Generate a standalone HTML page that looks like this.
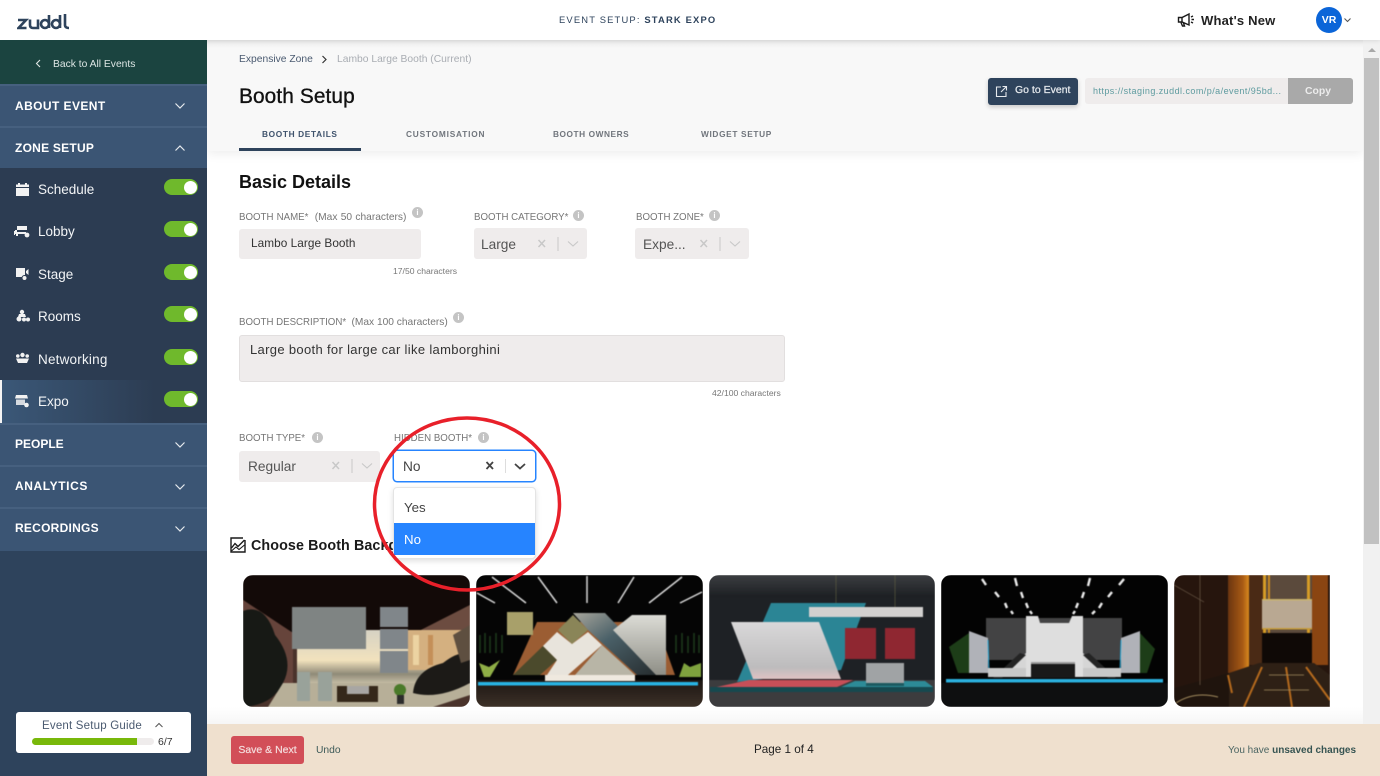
<!DOCTYPE html>
<html><head><meta charset="utf-8"><style>
*{box-sizing:border-box;margin:0;padding:0}
html,body{width:1380px;height:776px;overflow:hidden;background:#fff;font-family:"Liberation Sans",sans-serif}
.a{position:absolute;white-space:nowrap}
.side{left:0;top:40px;width:207px;height:736px;background:#2e435c}
.sec{left:0;width:207px;background:#3b5574;border-top:2px solid #46607f}
.sect{left:15px;color:#fff;font-size:12px;font-weight:bold;line-height:14px}
.it{left:38px;color:#f2f4f6;font-size:13.5px;line-height:16px}
.tg{left:164px;width:34px;height:16px;border-radius:8px;background:#6fb92c}
.tg:after{content:"";position:absolute;right:1.500px;top:1.500px;width:13px;height:13px;border-radius:50%;background:#fff}
.lab{color:#767676;font-size:9.700px;line-height:12px}
.i{width:11px;height:11px;border-radius:50%;background:#c4c4c4;color:#fff;font-size:8px;line-height:11px;text-align:center;font-weight:bold}
.f{background:#efecec;border-radius:3px}
.tab{top:128.500px;font-size:8.300px;font-weight:bold;letter-spacing:.65px;color:#70757c;line-height:10px}
.th{top:575px;height:132px;overflow:hidden;border-radius:10px}
.th svg{display:block;filter:blur(.45px)}
</style></head><body>

<!-- main backgrounds -->
<div class="a" style="left:207px;top:40px;width:1156px;height:111px;background:#f8f8f8;box-shadow:0 3px 10px rgba(0,0,0,.07)"></div>
<div class="a" style="left:207px;top:40px;width:1156px;height:8px;background:linear-gradient(#e9e9e9,#f8f8f8)"></div>
<div class="a" style="left:1363px;top:40px;width:17px;height:736px;background:#f1f1f1"></div>
<div class="a" style="left:1364px;top:58px;width:15px;height:486px;background:#c1c1c1"></div>
<svg class="a" style="left:1366px;top:46px" width="12" height="7"><path d="M2 6L6 2L10 6Z" fill="#a8a8a8"/></svg>

<!-- header -->
<div class="a" style="left:0;top:0;width:1380px;height:40px;background:#fff;box-shadow:0 1px 4px rgba(0,0,0,.1)"></div>
<svg class="a" style="left:17px;top:14px" width="54" height="16" viewBox="0 0 54 16" fill="none" stroke="#2e435c" stroke-width="2.600">
<path d="M1 6H9L1.500 14H9.500"/><path d="M13 5.500V11Q13 14 16 14H21V5.500"/><circle cx="28" cy="10" r="4"/><path d="M32 1V14"/><circle cx="39" cy="10" r="4"/><path d="M43 1V14"/><path d="M48 0V11Q48 14 52 14"/></svg>
<div class="a" style="left:559px;top:14px;font-size:9.400px;letter-spacing:1.170px;color:#2e435c;line-height:12px">EVENT SETUP: <b>STARK EXPO</b></div>
<svg class="a" style="left:1177px;top:12px" width="19" height="16" viewBox="0 0 19 16" fill="none" stroke="#1a1a1a" stroke-width="1.400"><path d="M1.500 5.500H5L12 2V13L5 10H1.500Z"/><path d="M5 5.500V10M4 10.500L5.500 14H7.500L6.500 11"/><path d="M14 5L16 4M14.500 7.500H17M14 10L16 11"/></svg>
<div class="a" style="left:1201px;top:13px;font-size:13px;font-weight:bold;color:#222;line-height:15px;letter-spacing:.2px">What's New</div>
<div class="a" style="left:1316px;top:7px;width:26px;height:26px;border-radius:50%;background:#0b65d8;color:#fff;font-size:10.500px;font-weight:bold;text-align:center;line-height:26px">VR</div>
<svg class="a" style="left:1343px;top:17px" width="9" height="6" fill="none" stroke="#555" stroke-width="1.100"><path d="M1.500 1.500L4.500 4.500L7.500 1.500"/></svg>

<!-- sidebar -->
<div class="a side"></div>
<div class="a" style="left:0;top:40px;width:207px;height:44px;background:#1b4440"></div>
<svg class="a" style="left:35px;top:59px" width="7" height="9" fill="none" stroke="#dfe6e4" stroke-width="1.100"><path d="M5 1L1.500 4.500L5 8"/></svg>
<div class="a" style="left:53px;top:58px;font-size:10.300px;color:#dde6e4;line-height:13px">Back to All Events</div>

<div class="a sec" style="top:84px;height:43px"></div>
<div class="a sec" style="top:126px;height:42px"></div>
<div class="a sect" style="top:99px;letter-spacing:.42px">ABOUT EVENT</div>
<div class="a sect" style="top:141px;letter-spacing:.25px">ZONE SETUP</div>
<svg class="a" style="left:174px;top:102px" width="12" height="8" fill="none" stroke="#e6eaee" stroke-width="1.200"><path d="M1.500 1.500L6 6L10.500 1.500"/></svg>
<svg class="a" style="left:174px;top:144px" width="12" height="8" fill="none" stroke="#e6eaee" stroke-width="1.200"><path d="M1.500 6.500L6 2L10.500 6.500"/></svg>

<div class="a" style="left:0;top:168px;width:207px;height:255px;background:#2c3c52"></div>
<div class="a" style="left:0;top:380px;width:207px;height:43px;background:linear-gradient(90deg,#3b5878,#2c3c52 75%)"></div>
<div class="a" style="left:0;top:380px;width:2px;height:43px;background:#f4f4f4"></div>

<svg class="a" style="left:16px;top:183px" width="13" height="13"><path d="M0 1.500H2V0H4V1.500H9V0H11V1.500H13V4H0ZM0 5H13V13H0Z" fill="#f2f2f2"/></svg>
<svg class="a" style="left:14px;top:224px" width="16" height="15" fill="#f2f2f2"><path d="M3 2H13V6H3Z"/><path d="M1 6H3V8H12V10H1ZM0 7H1V11H0Z"/><path d="M2 10H4V12H2Z"/><circle cx="13" cy="11" r="2.400"/></svg>
<svg class="a" style="left:15px;top:267px" width="15" height="15" fill="#f2f2f2"><path d="M1 1H10V10H1Z"/><path d="M11 4L13.500 2V8L11 6Z"/><circle cx="9.500" cy="11" r="2.500" stroke="#2c3c52"/></svg>
<svg class="a" style="left:16px;top:309px" width="14" height="14" fill="#f2f2f2"><circle cx="6" cy="3" r="2.200"/><path d="M3 5H9L10 8H2Z"/><circle cx="3" cy="10" r="2.500"/><circle cx="8" cy="10.500" r="2"/><circle cx="12" cy="10.500" r="2"/></svg>
<svg class="a" style="left:15px;top:351px" width="15" height="15" fill="#f2f2f2"><circle cx="7.500" cy="4" r="2.200"/><circle cx="2.800" cy="5" r="1.800"/><circle cx="12.200" cy="5" r="1.800"/><path d="M1 7.500H14L12 12H3Z"/></svg>
<svg class="a" style="left:15px;top:394px" width="15" height="15" fill="#f2f2f2"><path d="M1 1H12L13 4.500H0Z"/><path d="M1 5.500H10V11H1Z" opacity=".85"/><circle cx="11.500" cy="11" r="2.300"/></svg>

<div class="a it" style="top:182px">Schedule</div>
<div class="a it" style="top:224px">Lobby</div>
<div class="a it" style="top:267px">Stage</div>
<div class="a it" style="top:309px">Rooms</div>
<div class="a it" style="top:352px;letter-spacing:.2px">Networking</div>
<div class="a it" style="top:394px">Expo</div>
<div class="a tg" style="top:179px"></div>
<div class="a tg" style="top:221px"></div>
<div class="a tg" style="top:264px"></div>
<div class="a tg" style="top:306px"></div>
<div class="a tg" style="top:349px"></div>
<div class="a tg" style="top:391px"></div>

<div class="a sec" style="top:423px;height:43px"></div>
<div class="a sec" style="top:465px;height:43px"></div>
<div class="a sec" style="top:507px;height:44px"></div>
<div class="a sect" style="top:437px">PEOPLE</div>
<div class="a sect" style="top:479px;letter-spacing:.6px">ANALYTICS</div>
<div class="a sect" style="top:521px;letter-spacing:.25px">RECORDINGS</div>
<svg class="a" style="left:174px;top:441px" width="12" height="8" fill="none" stroke="#e6eaee" stroke-width="1.200"><path d="M1.500 1.500L6 6L10.500 1.500"/></svg>
<svg class="a" style="left:174px;top:483px" width="12" height="8" fill="none" stroke="#e6eaee" stroke-width="1.200"><path d="M1.500 1.500L6 6L10.500 1.500"/></svg>
<svg class="a" style="left:174px;top:525px" width="12" height="8" fill="none" stroke="#e6eaee" stroke-width="1.200"><path d="M1.500 1.500L6 6L10.500 1.500"/></svg>

<div class="a" style="left:16px;top:712px;width:175px;height:41px;background:#fff;border-radius:3px"></div>
<div class="a" style="left:42px;top:719px;font-size:11.500px;color:#4a5a70;line-height:14px;letter-spacing:.2px">Event Setup Guide</div>
<svg class="a" style="left:154px;top:722px" width="10" height="7" fill="none" stroke="#555" stroke-width="1"><path d="M1.500 5L5 1.500L8.500 5"/></svg>
<div class="a" style="left:32px;top:738px;width:122px;height:7px;border-radius:4px;background:#efecec"></div>
<div class="a" style="left:32px;top:738px;width:105px;height:7px;border-radius:4px 0 0 4px;background:#78b80a"></div>
<div class="a" style="left:158px;top:736px;font-size:10.500px;color:#333;line-height:13px">6/7</div>

<!-- page head -->
<div class="a" style="left:239px;top:53px;font-size:10.300px;color:#4a5a70;line-height:13px">Expensive Zone</div>
<svg class="a" style="left:321px;top:55px" width="7" height="9" fill="none" stroke="#333" stroke-width="1.200"><path d="M1.500 1L5 4.500L1.500 8"/></svg>
<div class="a" style="left:337px;top:53px;font-size:10.300px;color:#a9adb3;line-height:13px">Lambo Large Booth (Current)</div>
<div class="a" style="left:239px;top:85px;font-size:20.800px;color:#111;line-height:24px;letter-spacing:.12px;-webkit-text-stroke:.35px #111">Booth Setup</div>
<div class="a tab" style="left:262px;color:#3e526c">BOOTH DETAILS</div>
<div class="a tab" style="left:406px;letter-spacing:.8px">CUSTOMISATION</div>
<div class="a tab" style="left:553px;letter-spacing:.55px">BOOTH OWNERS</div>
<div class="a tab" style="left:701px">WIDGET SETUP</div>
<div class="a" style="left:239px;top:148px;width:122px;height:3px;background:#2e435c"></div>

<div class="a" style="left:988px;top:78px;width:90px;height:27px;background:#2e435c;border-radius:3px;box-shadow:0 2px 5px rgba(0,0,0,.2)"></div>
<svg class="a" style="left:995px;top:85px" width="13" height="13" fill="none" stroke="#e5e9ed" stroke-width="1.100"><path d="M6 2H1.500V11.500H11V7M7.500 1.500H11.500V5.500M11.500 1.500L6 7"/></svg>
<div class="a" style="left:1015px;top:84px;font-size:10.500px;color:#e4e8ec;line-height:13px;-webkit-text-stroke:.25px #e4e8ec">Go to Event</div>
<div class="a f" style="left:1085px;top:78px;width:268px;height:26px"></div>
<div class="a" style="left:1093px;top:85px;font-size:9px;color:#5e9b9f;line-height:12px;letter-spacing:.45px">https://staging.zuddl.com/p/a/event/95bd...</div>
<div class="a" style="left:1288px;top:78px;width:65px;height:26px;background:#a9a9a9;border-radius:0 3px 3px 0"></div>
<div class="a" style="left:1305px;top:85px;color:#ececec;font-size:10.400px;font-weight:bold;line-height:13px">Copy</div>

<!-- form -->
<div class="a" style="left:239px;top:171px;font-size:18px;font-weight:bold;color:#111;line-height:22px">Basic Details</div>

<div class="a lab" style="left:239px;top:212px;word-spacing:.5px">BOOTH NAME*&nbsp; <span style="font-size:10.200px">(Max 50 characters)</span></div>
<div class="a i" style="left:412px;top:207px">i</div>
<div class="a f" style="left:239px;top:229px;width:182px;height:30px"></div>
<div class="a" style="left:251px;top:236px;font-size:11.800px;color:#333;line-height:14px;letter-spacing:.05px">Lambo Large Booth</div>
<div class="a" style="left:393px;top:266px;font-size:8.600px;color:#777;line-height:10px">17/50 characters</div>

<div class="a lab" style="left:474px;top:212px">BOOTH CATEGORY*</div>
<div class="a i" style="left:573px;top:210px">i</div>
<div class="a f" style="left:474px;top:228px;width:113px;height:31px"></div>
<div class="a" style="left:481px;top:237px;font-size:13.700px;color:#555;line-height:16px">Large</div>
<svg class="a" style="left:536px;top:237px" width="46" height="14" fill="none" stroke="#c8c8c8" stroke-width="1.500"><path d="M2.500 3L9 10M9 3L2.500 10"/><path d="M22 0V14" stroke-width="1"/><path d="M32 4.500L37 9L42 4.500" stroke-width="1.100"/></svg>

<div class="a lab" style="left:636px;top:212px">BOOTH ZONE*</div>
<div class="a i" style="left:709px;top:210px">i</div>
<div class="a f" style="left:635px;top:228px;width:114px;height:31px"></div>
<div class="a" style="left:643px;top:237px;font-size:13.700px;color:#555;line-height:16px">Expe...</div>
<svg class="a" style="left:698px;top:237px" width="46" height="14" fill="none" stroke="#c8c8c8" stroke-width="1.500"><path d="M2.500 3L9 10M9 3L2.500 10"/><path d="M22 0V14" stroke-width="1"/><path d="M32 4.500L37 9L42 4.500" stroke-width="1.100"/></svg>

<div class="a lab" style="left:239px;top:317px">BOOTH DESCRIPTION*&nbsp; <span style="font-size:10.200px">(Max 100 characters)</span></div>
<div class="a i" style="left:453px;top:312px">i</div>
<div class="a f" style="left:239px;top:335px;width:546px;height:47px;border:1px solid #e2dfdf"></div>
<div class="a" style="left:250px;top:343px;font-size:13px;color:#333;line-height:14px;letter-spacing:.33px">Large booth for large car like lamborghini</div>
<div class="a" style="left:712px;top:388px;font-size:8.600px;color:#777;line-height:10px">42/100 characters</div>

<div class="a lab" style="left:239px;top:433px">BOOTH TYPE*</div>
<div class="a i" style="left:312px;top:432px">i</div>
<div class="a f" style="left:239px;top:451px;width:141px;height:31px"></div>
<div class="a" style="left:248px;top:459px;font-size:13.700px;color:#555;line-height:16px">Regular</div>
<svg class="a" style="left:330px;top:459px" width="46" height="14" fill="none" stroke="#c8c8c8" stroke-width="1.500"><path d="M2.500 3L9 10M9 3L2.500 10"/><path d="M22 0V14" stroke-width="1"/><path d="M32 4.500L37 9L42 4.500" stroke-width="1.100"/></svg>

<div class="a lab" style="left:394px;top:433px">HIDDEN BOOTH*</div>
<div class="a i" style="left:478px;top:432px">i</div>
<div class="a" style="left:393px;top:450px;width:143px;height:32px;border:1.500px solid #2684ff;border-radius:4px;background:#fff;box-shadow:0 0 0 .5px #2684ff"></div>
<div class="a" style="left:403px;top:459px;font-size:13.700px;color:#444;line-height:16px">No</div>
<svg class="a" style="left:484px;top:459px" width="46" height="14" fill="none" stroke="#444" stroke-width="1.800"><path d="M2.500 3L9 10M9 3L2.500 10"/><path d="M21.500 0V14" stroke="#ddd" stroke-width="1"/><path d="M31 5L36 9.500L41 5"/></svg>

<svg class="a" style="left:230px;top:537px" width="16" height="16" fill="none" stroke="#1a1a1a" stroke-width="1.400"><path d="M13 1H1V15H15V3"/><path d="M1.500 11L5 6.500L8 9.500L14.500 3"/><path d="M1.500 14L6 10L9 12.500L14.500 8" stroke-width="1.100"/></svg>
<div class="a" style="left:251px;top:538px;font-size:14.300px;font-weight:bold;color:#1a1a1a;line-height:17px;letter-spacing:.1px">Choose Booth Background</div>

<div class="a" style="left:393px;top:487px;width:143px;height:72px;background:#fff;border:1px solid #e4e4e4;border-radius:4px;box-shadow:0 2px 6px rgba(0,0,0,.13)"></div>
<div class="a" style="left:404px;top:500px;font-size:13.300px;color:#444;line-height:16px">Yes</div>
<div class="a" style="left:394px;top:523px;width:141px;height:32px;background:#2684ff"></div>
<div class="a" style="left:404px;top:532px;font-size:13.300px;color:#fff;line-height:16px">No</div>

<!-- thumbnails -->
<div class="a th" style="left:243px;width:227px"><svg width="227" height="132" viewBox="0 0 227 132">
<defs>
<linearGradient id="sky" x1="0" y1="0" x2="0" y2="1"><stop offset="0" stop-color="#d6d2c4"/><stop offset=".55" stop-color="#f2e2bd"/><stop offset=".8" stop-color="#8f8a78"/><stop offset="1" stop-color="#cfc6ad"/></linearGradient>
<linearGradient id="band" x1="0" y1="0" x2="1" y2="1"><stop offset="0" stop-color="#a8a69c"/><stop offset=".4" stop-color="#4a6068"/><stop offset="1" stop-color="#23282a"/></linearGradient>
<linearGradient id="cone" x1="0" y1="0" x2="0" y2="1"><stop offset="0" stop-color="#dcdcd6"/><stop offset="1" stop-color="#8e8e86"/></linearGradient>
<linearGradient id="wh" x1="0" y1="0" x2="0" y2="1"><stop offset="0" stop-color="#d9d8d9"/><stop offset=".8" stop-color="#bdbcbd"/><stop offset="1" stop-color="#e0c2c2"/></linearGradient>
<linearGradient id="cl" x1="0" y1="0" x2="0" y2="1"><stop offset="0" stop-color="#3c3e41"/><stop offset="1" stop-color="#1c1f23"/></linearGradient>
<linearGradient id="or" x1="0" y1="0" x2="1" y2="0"><stop offset="0" stop-color="#6b3510"/><stop offset=".7" stop-color="#a85a14"/><stop offset="1" stop-color="#d98a1e"/></linearGradient>
<linearGradient id="fl" x1="0" y1="0" x2="0" y2="1"><stop offset="0" stop-color="#1d1713"/><stop offset="1" stop-color="#3d3128"/></linearGradient>
</defs>
<rect width="227" height="132" fill="#4a332b"/>
<path d="M0 0H227V30L172 58H50L0 25Z" fill="#130a08"/>
<path d="M0 25L50 58V120H0Z" fill="#66443b"/><path d="M172 58L227 30V60H172Z" fill="#6c4c40"/>
<rect x="54" y="55" width="172" height="55" fill="url(#sky)"/>
<path d="M165 55H227V95H165Z" fill="#d4b080"/><rect x="170" y="60" width="6" height="30" fill="#ecd3a2"/><rect x="185" y="60" width="5" height="30" fill="#c48f58"/>
<path d="M0 36Q22 28 32 60Q52 85 40 108Q30 130 0 132Z" fill="#171915"/>
<rect x="49" y="32" width="74" height="42" fill="#7f8483"/>
<rect x="137" y="32" width="28" height="20" fill="#80868a"/><rect x="137" y="54" width="28" height="20" fill="#80868a"/><rect x="137" y="76" width="28" height="22" fill="#80868a"/>
<path d="M40 108H227V120L190 132H25Z" fill="#b7af98"/>
<rect x="54" y="97" width="13" height="29" fill="#99a29a"/><rect x="75" y="97" width="14" height="29" fill="#99a29a"/>
<rect x="94" y="111" width="41" height="16" fill="#35281a"/><rect x="104" y="111" width="22" height="8" fill="#a8a6a3"/>
<path d="M170 118Q172 95 200 88Q215 76 227 78V108Q195 125 170 118Z" fill="#1c1a17"/>
<path d="M210 60L227 50V85L218 88Z" fill="#5e4f40"/>
<circle cx="157" cy="115" r="6" fill="#4a7a2a"/><rect x="154" y="120" width="7" height="9" fill="#2c2c2c"/></svg></div>

<div class="a th" style="left:476px;width:227px"><svg width="227" height="132" viewBox="0 0 227 132">
<rect width="227" height="132" fill="#050505"/>
<g stroke="#d8d8d8" stroke-width="1.500"><path d="M16 2L50 28M1 18L19 28M62 2L81 28M111 1V28M158 2L142 28M206 2L173 28M226 17L204 28"/></g>
<path d="M4 78V60M9 78V58M14 78V61M20 78V58M26 78V60M200 78V60M206 78V58M212 78V61M218 78V58M223 78V60" stroke="#1d3a1c" stroke-width="1.500"/>
<path d="M37 100L61 47H151L189 72L199 100Z" fill="#9b5d33"/>
<rect x="31" y="37" width="26" height="23" fill="#a8a06a"/>
<path d="M37 100L67 71L81 85L64 100Z" fill="#4b4a2c"/>
<path d="M81 57L96 69L112 57L126 70L92 100H71L81 85L67 71Z" fill="#e8e4dc"/>
<path d="M126 70L159 100H99Z" fill="#b8b5a6"/>
<path d="M97 40L112 55L96 69L82 55Z" fill="#8a8558"/>
<path d="M97 38H129L189 100H161L112 55Z" fill="url(#band)"/>
<path d="M137 55L156 40H190V100H180Z" fill="url(#cone)"/>
<rect y="105" width="227" height="27" fill="url(#fl)"/>
<rect x="69" y="100" width="90" height="6" fill="#efe9df"/>
<rect x="2" y="107" width="220" height="3.500" fill="#28b3e2"/>
<path d="M3 88L13 92L24 85L14 102H8Z" fill="#8fae46"/><path d="M203 102L208 88L214 92L225 88V102Z" fill="#7fa23e"/></svg></div>

<div class="a th" style="left:709px;width:226px"><svg width="226" height="132" viewBox="0 0 226 132">
<rect width="226" height="132" fill="#1e2125"/><rect width="226" height="22" fill="url(#cl)"/><rect y="105" width="226" height="27" fill="#3c3c3e"/>
<path d="M127 0V32M186 0V32" stroke="#6d6a45" stroke-width=".5"/>
<path d="M62 28H157L132 95L28 107Z" fill="#2b8595"/>
<path d="M22 47H110L132 104H44Z" fill="url(#wh)"/>
<rect x="100" y="32" width="114" height="10" fill="#d2d0cf"/>
<rect x="136" y="53" width="31" height="31" fill="#8f2731"/><rect x="176" y="53" width="30" height="31" fill="#8f2731"/>
<path d="M3 113L40 105H144L128 112Z" fill="#c74f58"/>
<path d="M132 112L146 106H216L224 112Z" fill="#2d8b97"/>
<rect x="1" y="112" width="223" height="5" fill="#16494f"/>
<rect x="157" y="88" width="38" height="22" fill="#a0a3a5"/><rect x="157" y="108" width="38" height="3" fill="#1c5a60"/></svg></div>

<div class="a th" style="left:941px;width:227px"><svg width="227" height="132" viewBox="0 0 227 132">
<rect width="227" height="132" fill="#030303"/>
<g stroke="#ececec" stroke-width="2.400"><path d="M41 4L45 10M74 3L76 11M54 17L58 22M80 17L82 23M64 28L66 33M85 28L87 33M70 36L72 39M89 36L91 39M183 4L178 10M149 3L147 11M171 17L167 22M143 17L141 23M161 28L158 33M137 28L135 33M154 36L151 39M134 36L132 39"/></g>
<rect x="45" y="43" width="136" height="42" fill="#434344"/>
<path d="M85 41H97L99 48H128L131 41H142V102H85Z" fill="#dedede"/>
<path d="M85 78V102H60Z" fill="#d6d6d6"/><path d="M142 78L167 102H142Z" fill="#d6d6d6"/>
<path d="M79 78L52 103H61L85 80Z" fill="#242424"/><path d="M148 78L175 103H167L142 80Z" fill="#242424"/>
<rect x="90" y="87" width="44" height="2" fill="#999"/><rect x="90" y="89" width="44" height="14" fill="#191919"/>
<path d="M28 56L47 63V98H28Z" fill="#b0b2b8"/><path d="M180 63L199 56V98H180Z" fill="#b0b2b8"/>
<path d="M47 65L48 98" stroke="#28a9d8"/><path d="M180 65L179 98" stroke="#28a9d8"/>
<path d="M8 72L28 58V98H17Z" fill="#1d3d18"/><path d="M199 58L214 74L206 98H199Z" fill="#1d3d18"/>
<rect x="47" y="93" width="38" height="9" fill="#c8c8c8"/><rect x="142" y="93" width="38" height="9" fill="#c8c8c8"/>
<rect x="5" y="104" width="217" height="3.500" fill="#2bb0de"/>
<rect y="108" width="227" height="24" fill="#0e0f10"/></svg></div>

<div class="a th" style="left:1174px;width:156px;border-radius:10px 0 0 10px"><svg width="156" height="132" viewBox="0 0 156 132">
<rect width="156" height="132" fill="#26150d"/>
<rect x="54" y="0" width="21" height="100" fill="url(#or)"/><rect x="75" y="0" width="14" height="90" fill="#4a2a15"/>
<rect x="89" y="0" width="49" height="90" fill="#5b4a3c"/>
<rect x="89" y="0" width="3" height="62" fill="#d69c26"/><rect x="94" y="0" width="2" height="62" fill="#c88a22"/><rect x="133" y="0" width="3" height="62" fill="#d69c26"/><rect x="138" y="0" width="16" height="90" fill="#8a4512"/>
<rect x="88" y="25" width="50" height="28" fill="#b9a892"/><rect x="88" y="24" width="50" height="1.500" fill="#c9b36d"/><rect x="88" y="53" width="50" height="1.500" fill="#c49a3a"/>
<rect x="88" y="58" width="50" height="30" fill="#0f0906"/>
<path d="M0 113L55 98L85 88H140L156 100V132H0Z" fill="#2e2015"/>
<path d="M0 113L55 98V132H0Z" fill="#1f140d"/>
<path d="M54 100L58 118M88 92L70 132M112 92L118 132M132 92L156 125" stroke="#b56a1d" stroke-width="2" fill="none"/>
<path d="M0 10L30 27M26 0V110" stroke="#6b5a48" stroke-width=".7"/><path d="M2 128Q20 116 44 122" stroke="#a18a5d" fill="none"/><path d="M95 100H130M90 115H135" stroke="#a18a5d" stroke-width=".7"/></svg></div>

<div class="a" style="left:207px;top:707px;width:1156px;height:17px;background:linear-gradient(#fff,#f6f6f6)"></div>

<!-- red circle -->
<svg class="a" style="left:372px;top:415px" width="192" height="178" viewBox="0 0 192 178"><ellipse cx="95" cy="89" rx="92.500" ry="86" fill="none" stroke="#e8202a" stroke-width="3.500"/></svg>

<!-- footer -->
<div class="a" style="left:207px;top:724px;width:1173px;height:52px;background:#efe0ce"></div>
<div class="a" style="left:231px;top:736px;width:73px;height:28px;background:#d24e58;border-radius:3px;color:#f4dcdc;font-size:10.500px;text-align:center;line-height:28px;-webkit-text-stroke:.2px #f4dcdc">Save &amp; Next</div>
<div class="a" style="left:316px;top:744px;font-size:10.300px;color:#3d5a58;line-height:13px">Undo</div>
<div class="a" style="left:754px;top:743px;font-size:11.700px;color:#222;line-height:14px">Page 1 of 4</div>
<div class="a" style="left:1228px;top:744px;font-size:10px;color:#4b6563;line-height:13px">You have <b style="color:#365452">unsaved changes</b></div>
</body></html>
